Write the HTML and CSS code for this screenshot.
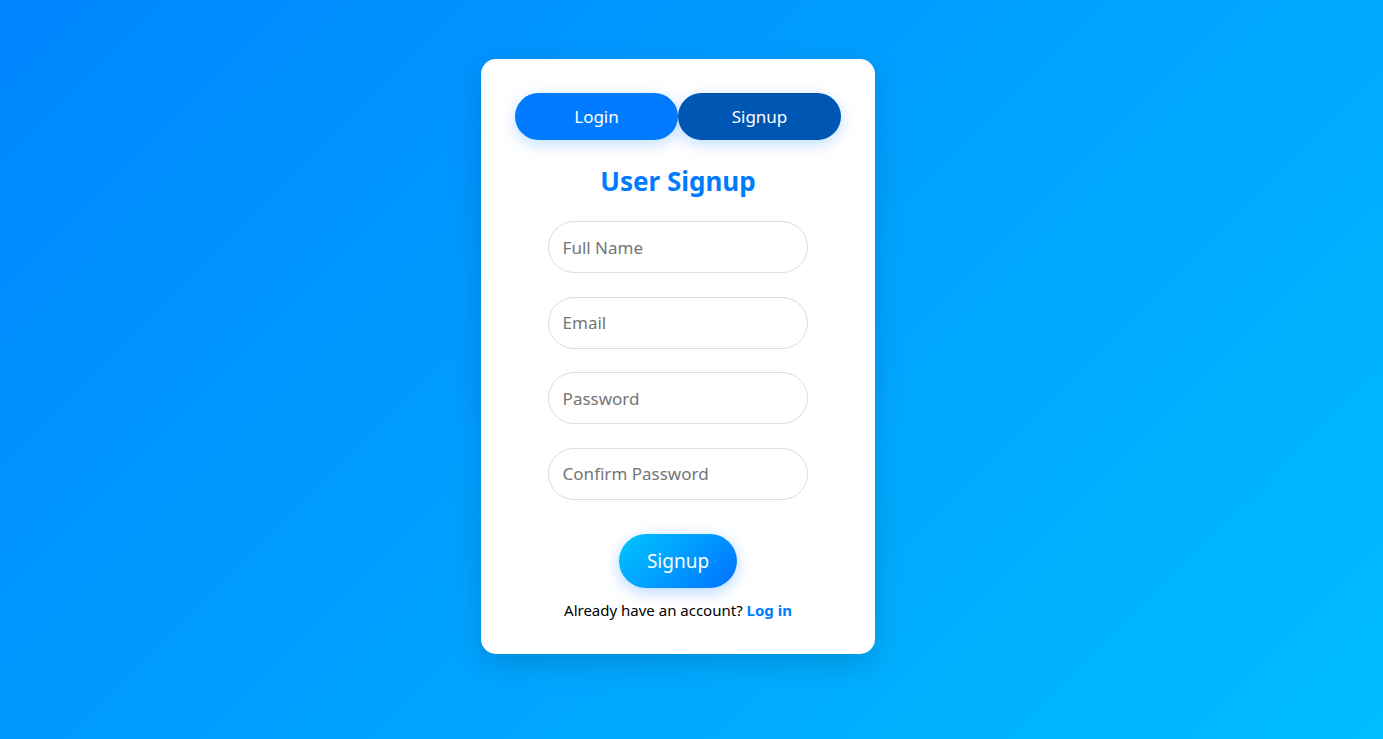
FILE: index.html
```html
<!DOCTYPE html>
<html lang="en">
  <head>
    <meta charset="utf-8">
    <title>User Signup</title>
    <link rel="stylesheet" href="styles.css">
  </head>
  <body>
    <div class="pagina">
      <div class="cartao">
        <div class="abas">
          <button class="aba">Login</button>
          <button class="aba ativa">Signup</button>
        </div>
        <h2 class="titulo">User Signup</h2>
        <form class="formulario">
          <input type="text" placeholder="Full Name">
          <input type="email" placeholder="Email">
          <input type="password" placeholder="Password">
          <input type="password" placeholder="Confirm Password">
          <button type="button" class="enviar">Signup</button>
        </form>
        <p class="rodape">Already have an account? <a href="#">Log in</a></p>
      </div>
    </div>
  </body>
</html>
```

FILE: styles.css
```css
* {
  margin: 0;
  box-sizing: border-box;
  font-family: "Segoe UI", "Noto Sans", sans-serif;
}

body {
  height: 739px;
  background: linear-gradient(135deg, #0085ff, #00bdff);
}

.pagina {
  display: flex;
  justify-content: center;
  padding: 59px 27px 0 0;
}

.cartao {
  width: 394px;
  background: #fff;
  border-radius: 15px;
  padding: 34px 34px 33px;
  box-shadow: 0 10px 30px rgba(0, 0, 0, 0.15);
  display: flex;
  flex-direction: column;
  align-items: center;
}

.abas {
  display: flex;
  width: 100%;
}

.aba {
  flex: 1;
  height: 47px;
  border: none;
  border-radius: 25px;
  background: #007bff;
  color: #fff;
  font-size: 17px;
  box-shadow: 0 4px 15px rgba(0, 123, 255, 0.25);
}

.aba.ativa {
  background: #0056b3;
}

.titulo {
  color: #007bff;
  font-size: 26px;
  line-height: 31px;
  margin: 26px 0 24px;
}

.formulario {
  width: 80%;
  display: flex;
  flex-direction: column;
  align-items: center;
  gap: 23.5px;
}

.formulario input {
  width: 100%;
  height: 52px;
  border: 1px solid #ddd;
  border-radius: 26px;
  padding: 0 14px;
  font-size: 17px;
  color: #333;
  outline: none;
}

.formulario input::placeholder {
  color: #757575;
}

.enviar {
  margin-top: 11px;
  width: 118px;
  height: 54px;
  border: none;
  border-radius: 27px;
  background: linear-gradient(135deg, #00c6ff, #0072ff);
  color: #fff;
  font-size: 19px;
  box-shadow: 0 4px 15px rgba(0, 123, 255, 0.3);
}

.rodape {
  margin-top: 12px;
  font-size: 15px;
  line-height: 21px;
  color: #000;
}

.rodape a {
  color: #007bff;
  font-weight: bold;
  text-decoration: none;
}
```
